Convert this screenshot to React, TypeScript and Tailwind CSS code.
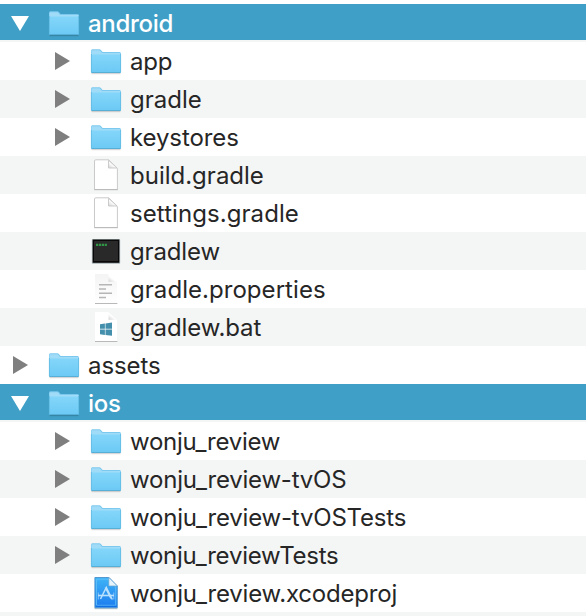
import React from "react";

type Kind = "folder" | "doc" | "terminal" | "text" | "bat" | "xcode";
type Entry = {
  name: string;
  kind: Kind;
  depth: 0 | 1;
  arrow?: "open" | "closed";
  selected?: boolean;
  tracking?: string;
};

const entries: Entry[] = [
  { name: "android", kind: "folder", depth: 0, arrow: "open", selected: true, tracking: "tracking-[-0.3px]" },
  { name: "app", kind: "folder", depth: 1, arrow: "closed", tracking: "tracking-[-0.2px]" },
  { name: "gradle", kind: "folder", depth: 1, arrow: "closed" },
  { name: "keystores", kind: "folder", depth: 1, arrow: "closed", tracking: "tracking-[-0.1px]" },
  { name: "build.gradle", kind: "doc", depth: 1 },
  { name: "settings.gradle", kind: "doc", depth: 1, tracking: "tracking-[0.07px]" },
  { name: "gradlew", kind: "terminal", depth: 1, tracking: "tracking-[-0.15px]" },
  { name: "gradle.properties", kind: "text", depth: 1, tracking: "tracking-[0.05px]" },
  { name: "gradlew.bat", kind: "bat", depth: 1, tracking: "tracking-[-0.1px]" },
  { name: "assets", kind: "folder", depth: 0, arrow: "closed", tracking: "tracking-[-0.1px]" },
  { name: "ios", kind: "folder", depth: 0, arrow: "open", selected: true, tracking: "tracking-[-0.3px]" },
  { name: "wonju_review", kind: "folder", depth: 1, arrow: "closed", tracking: "tracking-[-0.27px]" },
  { name: "wonju_review-tvOS", kind: "folder", depth: 1, arrow: "closed", tracking: "tracking-[-0.21px]" },
  { name: "wonju_review-tvOSTests", kind: "folder", depth: 1, arrow: "closed", tracking: "tracking-[-0.2px]" },
  { name: "wonju_reviewTests", kind: "folder", depth: 1, arrow: "closed", tracking: "tracking-[-0.25px]" },
  { name: "wonju_review.xcodeproj", kind: "xcode", depth: 1, tracking: "tracking-[-0.2px]" },
];

function Arrow({ state, selected }: { state?: "open" | "closed"; selected?: boolean }) {
  return (
    <svg width="20" height="36" viewBox="0 0 20 36" className="shrink-0" fill={selected ? "#fff" : "#7f7f7f"}>
      {state === "open" && <path d="M1 12H19L10 27Z" />}
      {state === "closed" && <path d="M3 10V28L18 19Z" />}
    </svg>
  );
}

function Icon({ kind }: { kind: Kind }) {
  return (
    <svg width="32" height="38" viewBox="0 0 32 38" className="shrink-0">
      {kind === "folder" && (
        <>
          <path d="M1.5 31.5H30.5" stroke="#000" strokeOpacity=".16" strokeWidth="1.4" />
          <path d="M1 9Q1 7.3 2.4 7.3H9.3Q10.4 7.3 11.1 8.3L12.6 10H29.5Q31 10 31 11.5V30H1Z" fill="#7cc9ef" />
          <path d="M1.5 9.2Q1.7 8.3 2.6 8.3H9.2Q10 8.3 10.6 9.2L12 11H30.4V13H1.5Z" fill="#a0dcf8" />
          <path d="M1 12.4H31V30Q31 31 30 31H2Q1 31 1 30Z" fill="url(#folder)" />
          <path d="M1.5 30.5H30.5" stroke="#57afd7" />
          <path d="M1.4 12V30M30.6 12V30" stroke="#61b9df" strokeWidth=".8" />
        </>
      )}
      {kind === "doc" && (
        <>
          <path d="M4.5 5Q4.5 3.8 5.7 3.8H18.7L27.4 12.3V33.5H4.5Z" fill="#fff" stroke="#cacaca" />
          <path d="M4.2 33.7H27.8" stroke="#b8b8b8" />
          <path d="M18.5 4.3V12H27Z" fill="url(#curl)" stroke="#c6c6c6" strokeWidth=".9" />
        </>
      )}
      {kind === "text" && (
        <>
          <path d="M5 4H18L27 12.5V33.5H5Z" fill="url(#paper)" />
          <path d="M5 33.5H27.4" stroke="#b9b9b9" />
          <path d="M18.5 4.5V11.8H27Z" fill="url(#curl)" />
          <path d="M9 14.7H22M9 19H16M9 23.2H22M9 27.5H16" stroke="#b6b6b6" strokeWidth="1.5" />
        </>
      )}
      {kind === "bat" && (
        <>
          <path d="M5 4H18L27 12.5V33.5H5Z" fill="#fff" />
          <path d="M5 33.5H27.4" stroke="#b9b9b9" />
          <path d="M18.5 4.5V11.8H27Z" fill="url(#curl)" />
          <path
            d="M10 16.2L14.9 15.6V20.8H10ZM15.5 15.5L22 14.6V20.8H15.5ZM10 21.5H14.9V26.9L10 26.2ZM15.5 21.5H22V27.8L15.5 26.9Z"
            fill="#438fac"
          />
        </>
      )}
      {kind === "terminal" && (
        <>
          <rect x="1.8" y="7" width="28.4" height="25" rx="1" fill="#b8c2c5" />
          <rect x="2.6" y="7.5" width="26.8" height="23.3" fill="#080808" />
          <rect x="4" y="9" width="24" height="20" fill="#292929" />
          <path d="M6 12.8H17" stroke="#2fa94a" strokeOpacity=".85" strokeWidth="2.2" strokeDasharray="2.2 .7" />
        </>
      )}
      {kind === "xcode" && (
        <>
          <path d="M4.5 34.7H27.5" stroke="#b0b4b8" strokeWidth=".9" />
          <path d="M4.9 3.5H19L27.3 12V33.8H4.9Z" fill="url(#xcode)" stroke="#4a92cc" strokeWidth=".9" />
          <path d="M6.5 5.2H18.5L25.7 13V31.3H6.5Z" fill="none" stroke="#63c2f8" strokeWidth=".8" />
          <path d="M6 32.3H26.5" stroke="#0d6be2" strokeWidth=".9" />
          <path d="M18.8 3.5V12H27.3Z" fill="#e7f3fb" stroke="#6ba7cf" strokeWidth=".7" />
          <g fill="none" stroke="#b9e0fd">
            <path d="M10.5 25L16.3 13.5L22.3 25.5M15.3 13.5L21 24.5" strokeWidth="1.5" />
            <path d="M8 21.5H24" strokeWidth="1.6" />
            <path d="M8.3 25.5V18.5M23.8 25.5V18.5" strokeWidth=".8" strokeOpacity=".8" />
          </g>
        </>
      )}
    </svg>
  );
}

export default function App() {
  return (
    <div className="h-[616px] w-[586px] overflow-hidden bg-white pt-1 font-['Inter','Liberation_Sans',sans-serif]">
      <svg width="0" height="0" className="absolute">
        <defs>
          <linearGradient id="folder" x2="0" y2="1">
            <stop stopColor="#84d6fa" />
            <stop offset="1" stopColor="#6bc9f4" />
          </linearGradient>
          <linearGradient id="curl" x1="0" y1="1" x2=".7" y2=".2">
            <stop stopColor="#d2d2d2" />
            <stop offset=".6" stopColor="#fff" />
          </linearGradient>
          <linearGradient id="paper" x2="0" y2="1">
            <stop stopColor="#f4f4f4" />
            <stop offset="1" stopColor="#fff" />
          </linearGradient>
          <linearGradient id="xcode" x2="0" y2="1">
            <stop stopColor="#3fb4f6" />
            <stop offset="1" stopColor="#1b7bef" />
          </linearGradient>
        </defs>
      </svg>
      {entries.map((e, i) => (
        <div key={e.name} className={`h-[38px] ${i % 2 ? "bg-white" : "bg-[#f4f5f5]"}`}>
          <div
            className={`flex items-start ${e.depth ? "pl-[52px]" : "pl-[10px]"} ${
              e.selected ? "h-9 bg-[#409fc7] font-medium text-white" : "h-[38px] text-[#262626]"
            }`}
          >
            <Arrow state={e.arrow} selected={e.selected} />
            <div className="ml-[18px] flex">
              <Icon kind={e.kind} />
            </div>
            <span className={`ml-2 text-[24px] leading-[40px] whitespace-nowrap ${e.tracking ?? ""}`}>{e.name}</span>
          </div>
        </div>
      ))}
      <div className="h-1 bg-[#f4f5f5]" />
    </div>
  );
}
